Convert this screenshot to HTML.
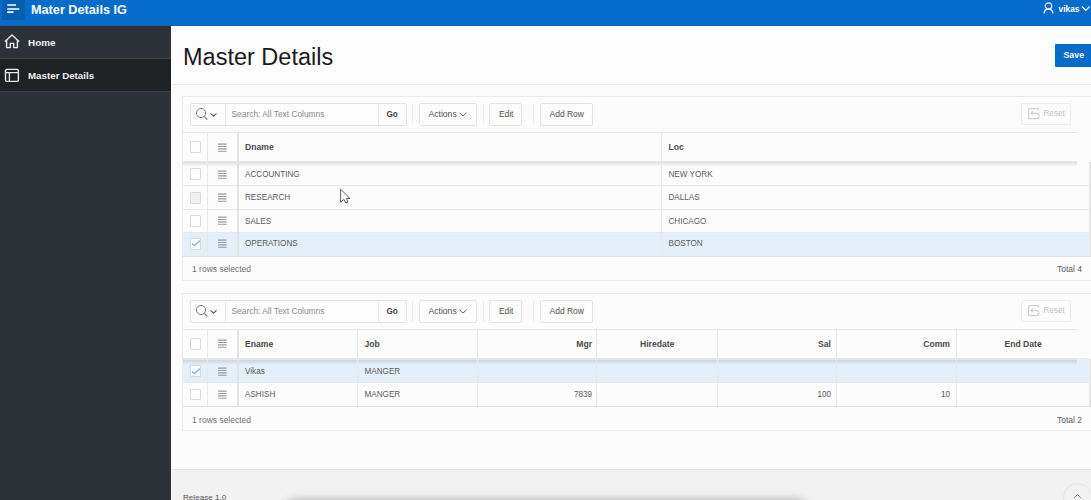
<!DOCTYPE html>
<html><head><meta charset="utf-8">
<style>
*{box-sizing:border-box;margin:0;padding:0}
html,body{width:1091px;height:500px;overflow:hidden;background:#fcfcfc;font-family:"Liberation Sans",sans-serif;position:relative}
.a{position:absolute}
.t{position:absolute;white-space:pre;line-height:1}
#hdr{left:0;top:0;width:1091px;height:25px;background:#056cc9}
#hdrb{left:0;top:25px;width:1091px;height:1px;background:#0863b9}
#burger{left:2px;top:0;width:23px;height:20px;background:#065fb1}
.bl{position:absolute;background:#fff;height:2px;left:5px}
#nav{left:0;top:26px;width:171px;height:474px;background:#2d3138}
.navsep{position:absolute;left:0;width:171px;height:1px;background:#46423f}
#title{left:172px;top:26px;width:919px;height:58px;background:#fdfdfd}
#tsep{left:172px;top:84px;width:919px;height:1px;background:#e9e9e9}
.reg{position:absolute;background:#fcfcfc;border:1px solid #ebebeb}
.btn{position:absolute;border:1px solid #e4e4e4;background:#fdfdfd;border-radius:2px}
.vsep{position:absolute;width:1px;background:#efefef}
.hl{position:absolute;height:1px;background:#e8e8e8}
.vl{position:absolute;width:1px;background:#e8e8e8}
.cb{position:absolute;width:11px;height:11.5px;border:1px solid #dadada;background:#fdfdfd;border-radius:1px}
.ham{position:absolute;width:9px;height:10px;line-height:0}
.ham i{position:absolute;left:0;width:8.5px;height:1.1px;background:#8a8a8a}
.hd{font-weight:bold;font-size:8.6px;color:#4a4a4a}
.cell{font-size:8.15px;color:#5a5a5a}
</style></head><body>
<!-- header -->
<div id="hdr" class="a"></div>
<div id="hdrb" class="a"></div>
<div id="burger" class="a"></div>
<svg class="a" style="left:0;top:0" width="26" height="20" viewBox="0 0 26 20"><path d="M7.3 5H16M7.3 9H19.3M7.3 12.2H13.5" stroke="#fff" stroke-width="1.7"/></svg>
<div class="t" style="left:31px;top:4px;font-size:12.7px;font-weight:bold;color:#fff">Mater Details IG</div>
<svg class="a" style="left:1043px;top:2px" width="11" height="12" viewBox="0 0 11 12">
  <circle cx="5.5" cy="4" r="3.2" fill="none" stroke="#e6eefa" stroke-width="1.3"/>
  <path d="M1 11.5 C1.5 8 3.5 7 5.5 7 C7.5 7 9.5 8 10 11.5" fill="none" stroke="#e6eefa" stroke-width="1.3"/>
</svg>
<div class="t" style="left:1058.5px;top:4.5px;font-size:8.4px;font-weight:bold;color:#fff">vikas</div>
<svg class="a" style="left:1081px;top:5px" width="10" height="7" viewBox="0 0 10 7">
  <path d="M1 1.5 L4.8 5.3 L8.6 1.5" fill="none" stroke="#fff" stroke-width="1.2"/>
</svg>

<!-- nav -->
<div id="nav" class="a"></div>
<div class="a" style="left:0;top:59px;width:171px;height:32px;background:#1f2225"></div>
<div class="navsep" style="top:58px"></div>
<div class="navsep" style="top:91px;background:#3a3d42"></div>
<svg class="a" style="left:4px;top:34px" width="16" height="15" viewBox="0 0 16 15">
  <path d="M0.9 7.6 L8 1 L15.1 7.6 M2.6 6.2 V13.6 H6.3 V9.4 H9.7 V13.6 H13.4 V6.2" fill="none" stroke="#e8e8e8" stroke-width="1.4" stroke-linejoin="round"/>
</svg>
<div class="t" style="left:28px;top:38px;font-size:9.9px;font-weight:bold;color:#f0f0f0">Home</div>
<svg class="a" style="left:4px;top:67.5px" width="16" height="15" viewBox="0 0 16 15">
  <rect x="1.5" y="1.4" width="12.9" height="12" rx="1.3" fill="none" stroke="#e8e8e8" stroke-width="1.4"/>
  <path d="M1.5 4.6 H14.4 M5.4 4.6 V13.4" fill="none" stroke="#e8e8e8" stroke-width="1.3"/>
</svg>
<div class="t" style="left:28px;top:71.3px;font-size:9.75px;font-weight:bold;color:#f0f0f0">Master Details</div>

<!-- title bar -->
<div id="title" class="a"></div>
<div id="tsep" class="a"></div>
<div class="t" style="left:183px;top:46.3px;font-size:23.5px;color:#1a1a1a">Master Details</div>
<div class="a" style="left:1055px;top:44px;width:40px;height:23px;background:#056cc9;border-radius:1px"></div>
<div class="t" style="left:1063.5px;top:50.8px;font-size:8.8px;font-weight:bold;color:#fff">Save</div>

<!-- ============ REGION 1 ============ -->
<div class="reg" style="left:182px;top:96px;width:920px;height:185px"></div>
<div class="btn" style="left:190px;top:103px;width:217px;height:23px"></div>
<div class="vl" style="left:225px;top:104px;height:21px;background:#e8e8e8"></div>
<div class="vl" style="left:378px;top:104px;height:21px;background:#e8e8e8"></div>
<svg class="a" style="left:195px;top:107px" width="24" height="14" viewBox="0 0 24 14">
  <circle cx="6" cy="6" r="4.6" fill="none" stroke="#7c7c7c" stroke-width="1"/>
  <path d="M9.3 9.3 L12.4 12.5" stroke="#7c7c7c" stroke-width="1.1"/>
  <path d="M15.5 6.3 L18.5 9.2 L21.5 6.3" fill="none" stroke="#5e5e5e" stroke-width="1.1"/>
</svg>
<div class="t" style="left:231.5px;top:110px;font-size:8.4px;color:#8a8a8a">Search: All Text Columns</div>
<div class="t" style="left:386.5px;top:110.8px;font-size:8.2px;font-weight:bold;color:#444">Go</div>
<div class="vsep" style="left:412px;top:104px;height:21px"></div>
<div class="btn" style="left:419px;top:103px;width:58px;height:23px"></div>
<div class="t" style="left:428.5px;top:110px;font-size:8.6px;color:#505050">Actions</div>
<svg class="a" style="left:459px;top:111.5px" width="8" height="5" viewBox="0 0 8 5"><path d="M0.5 0.8 L4 4 L7.5 0.8" fill="none" stroke="#505050" stroke-width="0.9"/></svg>
<div class="vsep" style="left:483px;top:104px;height:21px"></div>
<div class="btn" style="left:489px;top:103px;width:33px;height:23px"></div>
<div class="t" style="left:499px;top:110px;font-size:8.4px;color:#505050">Edit</div>
<div class="vsep" style="left:533px;top:104px;height:21px"></div>
<div class="btn" style="left:540px;top:103px;width:53px;height:23px"></div>
<div class="t" style="left:549.5px;top:110px;font-size:8.5px;color:#505050">Add Row</div>
<div class="btn" style="left:1021px;top:103px;width:50px;height:22px;border-color:#ececec"></div>
<svg class="a" style="left:1027px;top:107px" width="13" height="13" viewBox="0 0 13 13">
  <path d="M11.5 3.2 V2.3 Q11.5 1.6 10.8 1.6 H2.3 Q1.6 1.6 1.6 2.3 V10.9 Q1.6 11.6 2.3 11.6 H9.2 C11 11.6 12 10.4 12 8.9 C12 7.4 11 6.3 9.2 6.3 H4.2 M6 4.4 L4 6.3 L6 8.2" fill="none" stroke="#d2d2d2" stroke-width="1.15"/>
</svg>
<div class="t" style="left:1043.5px;top:109.5px;font-size:8.15px;color:#bfbfbf">Reset</div>

<!-- grid header -->
<div class="hl" style="left:183px;top:132px;width:894px"></div>
<div class="a" style="left:183px;top:161px;width:894px;height:1px;background:#e8e8e8"></div><div class="a" style="left:183px;top:162px;width:894px;height:5px;background:linear-gradient(rgba(0,0,0,0.11),rgba(0,0,0,0))"></div>
<!-- rows -->
<div class="hl" style="left:183px;top:185px;width:906px"></div>
<div class="hl" style="left:183px;top:209px;width:906px"></div>
<div class="hl" style="left:183px;top:232px;width:906px"></div>
<div class="a" style="left:183px;top:233px;width:906px;height:23px;background:#e5eff9"></div>
<div class="hl" style="left:183px;top:256px;width:908px;background:#e2e2e2"></div>
<div class="a" style="left:1089px;top:162px;width:2px;height:94px;background:#e6e6e6"></div>
<div class="vl" style="left:207px;top:133px;height:123px"></div>
<div class="a" style="left:237px;top:133px;width:2px;height:123px;background:#e3e3e3"></div>
<div class="vl" style="left:661px;top:133px;height:123px"></div>

<div class="cb" style="left:190px;top:141px"></div>
<div class="cb" style="left:190px;top:168px"></div>
<div class="cb" style="left:190px;top:192px;background:#f0f0f0"></div>
<div class="cb" style="left:190px;top:215px"></div>
<div class="cb" style="left:190px;top:238px"></div>
<svg class="a" style="left:191px;top:240px" width="10" height="7" viewBox="0 0 10 7"><path d="M1 3.5 L3.3 5.6 L8.8 0.8" fill="none" stroke="#72ade9" stroke-width="1.2"/></svg>

<div class="ham" style="left:218px;top:142.5px"><svg width="9" height="10" viewBox="0 0 9 10"><path d="M0 1.1H8.6M0 3.5H8.6M0 5.9H8.6M0 8.3H8.6" stroke="#9a9a9a" stroke-width="1.1"/></svg></div>
<div class="ham" style="left:218px;top:169.5px"><svg width="9" height="10" viewBox="0 0 9 10"><path d="M0 1.1H8.6M0 3.5H8.6M0 5.9H8.6M0 8.3H8.6" stroke="#9a9a9a" stroke-width="1.1"/></svg></div>
<div class="ham" style="left:218px;top:192.9px"><svg width="9" height="10" viewBox="0 0 9 10"><path d="M0 1.1H8.6M0 3.5H8.6M0 5.9H8.6M0 8.3H8.6" stroke="#9a9a9a" stroke-width="1.1"/></svg></div>
<div class="ham" style="left:218px;top:216px"><svg width="9" height="10" viewBox="0 0 9 10"><path d="M0 1.1H8.6M0 3.5H8.6M0 5.9H8.6M0 8.3H8.6" stroke="#9a9a9a" stroke-width="1.1"/></svg></div>
<div class="ham" style="left:218px;top:238.7px"><svg width="9" height="10" viewBox="0 0 9 10"><path d="M0 1.1H8.6M0 3.5H8.6M0 5.9H8.6M0 8.3H8.6" stroke="#9a9a9a" stroke-width="1.1"/></svg></div>

<div class="t hd" style="left:245px;top:143px">Dname</div>
<div class="t hd" style="left:668.5px;top:143px">Loc</div>
<div class="t cell" style="left:245px;top:171.2px">ACCOUNTING</div>
<div class="t cell" style="left:668.5px;top:171.2px">NEW YORK</div>
<div class="t cell" style="left:245px;top:194.3px">RESEARCH</div>
<div class="t cell" style="left:668.5px;top:194.3px">DALLAS</div>
<div class="t cell" style="left:245px;top:217.5px">SALES</div>
<div class="t cell" style="left:668.5px;top:217.5px">CHICAGO</div>
<div class="t cell" style="left:245px;top:240.4px">OPERATIONS</div>
<div class="t cell" style="left:668.5px;top:240.4px">BOSTON</div>
<div class="t cell" style="left:192px;top:265px;font-size:8.5px;color:#707070">1 rows selected</div>
<div class="t cell" style="right:9px;top:265px;font-size:8.5px;color:#606060">Total 4</div>

<!-- cursor -->
<svg class="a" style="left:339px;top:188px" width="13" height="17" viewBox="0 0 13 17">
  <path d="M1.6 1.2 V14.2 L4.9 11.4 L6.9 15 L9 14.1 L7.4 10.5 H11 Z" fill="#fff" stroke="#606060" stroke-width="1" stroke-linejoin="round"/>
</svg>

<!-- ============ REGION 2 ============ -->
<div class="reg" style="left:182px;top:293px;width:920px;height:138px"></div>
<div class="btn" style="left:190px;top:300px;width:217px;height:23px"></div>
<div class="vl" style="left:225px;top:301px;height:21px;background:#e8e8e8"></div>
<div class="vl" style="left:378px;top:301px;height:21px;background:#e8e8e8"></div>
<svg class="a" style="left:195px;top:304px" width="24" height="14" viewBox="0 0 24 14">
  <circle cx="6" cy="6" r="4.6" fill="none" stroke="#7c7c7c" stroke-width="1"/>
  <path d="M9.3 9.3 L12.4 12.5" stroke="#7c7c7c" stroke-width="1.1"/>
  <path d="M15.5 6.3 L18.5 9.2 L21.5 6.3" fill="none" stroke="#5e5e5e" stroke-width="1.1"/>
</svg>
<div class="t" style="left:231.5px;top:307px;font-size:8.4px;color:#8a8a8a">Search: All Text Columns</div>
<div class="t" style="left:386.5px;top:307.8px;font-size:8.2px;font-weight:bold;color:#444">Go</div>
<div class="vsep" style="left:412px;top:301px;height:21px"></div>
<div class="btn" style="left:419px;top:300px;width:58px;height:23px"></div>
<div class="t" style="left:428.5px;top:307px;font-size:8.6px;color:#505050">Actions</div>
<svg class="a" style="left:459px;top:308.5px" width="8" height="5" viewBox="0 0 8 5"><path d="M0.5 0.8 L4 4 L7.5 0.8" fill="none" stroke="#505050" stroke-width="0.9"/></svg>
<div class="vsep" style="left:483px;top:301px;height:21px"></div>
<div class="btn" style="left:489px;top:300px;width:33px;height:23px"></div>
<div class="t" style="left:499px;top:307px;font-size:8.4px;color:#505050">Edit</div>
<div class="vsep" style="left:533px;top:301px;height:21px"></div>
<div class="btn" style="left:540px;top:300px;width:53px;height:23px"></div>
<div class="t" style="left:549.5px;top:307px;font-size:8.5px;color:#505050">Add Row</div>
<div class="btn" style="left:1021px;top:300px;width:50px;height:22px;border-color:#ececec"></div>
<svg class="a" style="left:1027px;top:304px" width="13" height="13" viewBox="0 0 13 13">
  <path d="M11.5 3.2 V2.3 Q11.5 1.6 10.8 1.6 H2.3 Q1.6 1.6 1.6 2.3 V10.9 Q1.6 11.6 2.3 11.6 H9.2 C11 11.6 12 10.4 12 8.9 C12 7.4 11 6.3 9.2 6.3 H4.2 M6 4.4 L4 6.3 L6 8.2" fill="none" stroke="#d2d2d2" stroke-width="1.15"/>
</svg>
<div class="t" style="left:1043.5px;top:306.5px;font-size:8.15px;color:#bfbfbf">Reset</div>

<div class="hl" style="left:183px;top:329px;width:894px"></div>
<div class="a" style="left:183px;top:358px;width:906px;height:25px;background:#e5eff9"></div>
<div class="a" style="left:183px;top:358px;width:894px;height:1.5px;background:#e6e6e6"></div><div class="a" style="left:183px;top:359.5px;width:894px;height:5px;background:linear-gradient(rgba(0,0,0,0.11),rgba(0,0,0,0))"></div>
<div class="hl" style="left:183px;top:382px;width:906px"></div>
<div class="hl" style="left:183px;top:406px;width:908px;background:#e2e2e2"></div>
<div class="a" style="left:1089px;top:359px;width:2px;height:47px;background:#e6e6e6"></div>
<div class="vl" style="left:207px;top:330px;height:76px"></div>
<div class="a" style="left:237px;top:330px;width:2px;height:76px;background:#e3e3e3"></div>
<div class="vl" style="left:357px;top:330px;height:76px"></div>
<div class="vl" style="left:477px;top:330px;height:76px"></div>
<div class="vl" style="left:596px;top:330px;height:76px"></div>
<div class="vl" style="left:717px;top:330px;height:76px"></div>
<div class="vl" style="left:836px;top:330px;height:76px"></div>
<div class="vl" style="left:956px;top:330px;height:76px"></div>

<div class="cb" style="left:190px;top:338px"></div>
<div class="cb" style="left:190px;top:365px"></div>
<svg class="a" style="left:191px;top:367.5px" width="10" height="7" viewBox="0 0 10 7"><path d="M1 3.5 L3.3 5.6 L8.8 0.8" fill="none" stroke="#72ade9" stroke-width="1.2"/></svg>
<div class="cb" style="left:190px;top:388.7px"></div>
<div class="ham" style="left:218px;top:338.9px"><svg width="9" height="10" viewBox="0 0 9 10"><path d="M0 1.1H8.6M0 3.5H8.6M0 5.9H8.6M0 8.3H8.6" stroke="#9a9a9a" stroke-width="1.1"/></svg></div>
<div class="ham" style="left:218px;top:367.2px"><svg width="9" height="10" viewBox="0 0 9 10"><path d="M0 1.1H8.6M0 3.5H8.6M0 5.9H8.6M0 8.3H8.6" stroke="#9a9a9a" stroke-width="1.1"/></svg></div>
<div class="ham" style="left:218px;top:390.3px"><svg width="9" height="10" viewBox="0 0 9 10"><path d="M0 1.1H8.6M0 3.5H8.6M0 5.9H8.6M0 8.3H8.6" stroke="#9a9a9a" stroke-width="1.1"/></svg></div>

<div class="t hd" style="left:245px;top:340px">Ename</div>
<div class="t hd" style="left:364.5px;top:340px">Job</div>
<div class="t hd" style="right:499px;top:340px">Mgr</div>
<div class="t hd" style="left:640px;top:340px">Hiredate</div>
<div class="t hd" style="right:260px;top:340px">Sal</div>
<div class="t hd" style="right:141px;top:340px">Comm</div>
<div class="t hd" style="left:1004.5px;top:340px">End Date</div>
<div class="t cell" style="left:245px;top:367.7px">Vikas</div>
<div class="t cell" style="left:364.5px;top:367.7px">MANGER</div>
<div class="t cell" style="left:245px;top:391.4px">ASHISH</div>
<div class="t cell" style="left:364.5px;top:391.4px">MANGER</div>
<div class="t cell" style="right:499px;top:391.4px">7839</div>
<div class="t cell" style="right:260px;top:391.4px">100</div>
<div class="t cell" style="right:141px;top:391.4px">10</div>
<div class="t cell" style="left:192px;top:415.5px;font-size:8.5px;color:#707070">1 rows selected</div>
<div class="t cell" style="right:9px;top:415.5px;font-size:8.5px;color:#606060">Total 2</div>

<!-- footer -->
<div class="a" style="left:172px;top:469px;width:919px;height:1px;background:#e3e3e3"></div>
<div class="a" style="left:172px;top:470px;width:919px;height:30px;background:#f2f2f2"></div>
<div class="t" style="left:183px;top:494.3px;font-size:8.1px;color:#555">Release 1.0</div>
<div class="a" style="left:283px;top:502px;width:526px;height:40px;border-radius:14px;background:#bbb;box-shadow:0 0 9px 2px rgba(0,0,0,0.3)"></div>
<div class="a" style="left:1062.5px;top:483px;width:29.5px;height:29.5px;border-radius:50%;border:1px solid #e4e4e4;background:#f2f2f2"></div>
<svg class="a" style="left:1073px;top:493px" width="9" height="6" viewBox="0 0 9 6"><path d="M1 5 L4.5 1.5 L8 5" fill="none" stroke="#777" stroke-width="1"/></svg>
</body></html>
